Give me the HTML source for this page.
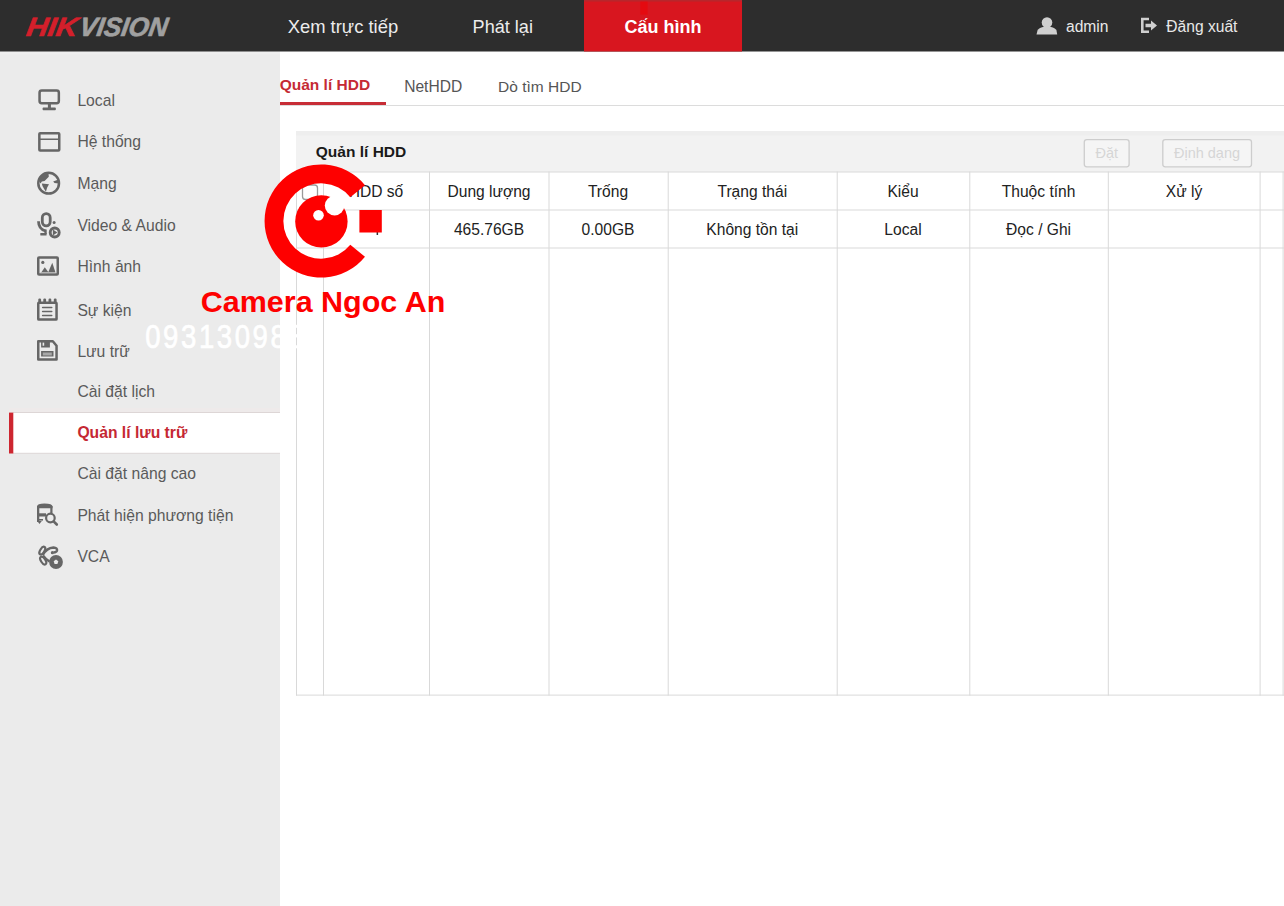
<!DOCTYPE html>
<html><head><meta charset="utf-8">
<style>
html,body{margin:0;padding:0;width:1284px;height:906px;overflow:hidden;background:#fff;}
svg{display:block;}
text{font-family:"Liberation Sans",sans-serif;}
</style></head>
<body>
<svg width="1284" height="906" viewBox="0 0 1284 906">
<!-- backgrounds -->
<rect x="0" y="0" width="1284" height="906" fill="#ffffff"/>
<rect x="0" y="51.5" width="280" height="854.5" fill="#ebebeb"/>
<rect x="0" y="51.5" width="280" height="3" fill="#eeeeee"/>
<rect x="0" y="0" width="1284" height="51.5" fill="#2d2d2d"/>

<!-- header logo -->
<g font-weight="bold" font-style="italic" font-size="26.5" transform="translate(0,36) skewX(-9) translate(0,-36)">
<text x="25.4" y="36" fill="#d41f2b" stroke="#d41f2b" stroke-width="0.7" textLength="51" lengthAdjust="spacingAndGlyphs">HIK</text>
<text x="78.4" y="36" fill="#a0a0a0" stroke="#a0a0a0" stroke-width="0.7" textLength="88" lengthAdjust="spacingAndGlyphs">VISION</text>
</g>

<!-- nav -->
<g font-size="18" fill="#ececec">
<text x="287.7" y="32.7" font-size="18.4">Xem trực tiếp</text>
<text x="472.6" y="32.7" font-size="18.1">Phát lại</text>
</g>
<rect x="584" y="0" width="158" height="51.5" fill="#d8161f"/>
<rect x="584" y="0" width="158" height="1.6" fill="#b8262c"/>
<rect x="640.3" y="1.6" width="7.3" height="13" fill="#e40a10"/>
<text x="663" y="32.7" font-size="18" font-weight="bold" fill="#ffffff" text-anchor="middle">Cấu hình</text>

<!-- user -->
<g fill="#cfcfcf">
<circle cx="1047" cy="22.5" r="5.3"/>
<path d="M1036.5 34.5 L1037.5 30.5 Q1039 27.5 1043 27 L1051 27 Q1055 27.5 1056.5 30.5 L1057.2 34.5 Z"/>
</g>
<text x="1066" y="31.9" font-size="15.6" fill="#e8e8e8">admin</text>
<g fill="none" stroke="#cfcfcf" stroke-width="2.6">
<path d="M1149 19 L1142.3 19 L1142.3 31.8 L1149 31.8"/>
</g>
<path d="M1145.5 23.7 L1151 23.7 L1151 20.5 L1157 25.5 L1151 30.5 L1151 27.3 L1145.5 27.3 Z" fill="#cfcfcf"/>
<text x="1166.3" y="31.9" font-size="15.6" fill="#e8e8e8">Đăng xuất</text>

<!-- tabs -->
<rect x="280" y="105" width="1004" height="1" fill="#dcdcdc"/>
<rect x="280" y="102" width="106" height="3" fill="#c72d36"/>
<text x="279.7" y="90.1" font-size="15.5" font-weight="bold" fill="#c52a34">Quản lí HDD</text>
<text x="404.2" y="91.6" font-size="15.6" fill="#555555">NetHDD</text>
<text x="498.1" y="91.6" font-size="15.5" fill="#555555">Dò tìm HDD</text>

<!-- sidebar active row -->
<rect x="9" y="408" width="271" height="4.5" fill="#eeeaea"/>
<rect x="13" y="412.5" width="267" height="41" fill="#ffffff"/>
<rect x="13" y="412" width="267" height="1" fill="#ddd6d6"/>
<rect x="13" y="452.8" width="267" height="1" fill="#ddd6d6"/>
<rect x="9" y="412.6" width="4.3" height="40.9" fill="#cd2630"/>

<!-- sidebar text -->
<g font-size="15.7" fill="#5a5a5a">
<text x="77.4" y="105.8">Local</text>
<text x="77.4" y="147.0">Hệ thống</text>
<text x="77.4" y="189.1">Mạng</text>
<text x="77.4" y="230.7">Video &amp; Audio</text>
<text x="77.4" y="272.2">Hình ảnh</text>
<text x="77.4" y="315.5">Sự kiện</text>
<text x="77.4" y="356.9">Lưu trữ</text>
<text x="77.4" y="396.7">Cài đặt lịch</text>
<text x="77.4" y="437.7" font-weight="bold" fill="#c52833">Quản lí lưu trữ</text>
<text x="77.4" y="478.6">Cài đặt nâng cao</text>
<text x="77.4" y="520.6">Phát hiện phương tiện</text>
<text x="77.4" y="561.5">VCA</text>
</g>

<!-- sidebar icons -->
<g fill="none" stroke="#666" stroke-width="2.5">
<!-- local monitor -->
<rect x="39.55" y="90.55" width="19.3" height="12.6" rx="2.2"/>
<!-- he thong -->
<rect x="39.35" y="133.25" width="19.9" height="17.2" rx="0.8"/>
<!-- globe -->
<circle cx="48.65" cy="183.2" r="10.35"/>
<!-- image -->
<rect x="38.25" y="257.55" width="19.5" height="17" rx="0.8"/>
<!-- notepad -->
<rect x="38.25" y="302.8" width="18.3" height="16.75" rx="0.6"/>
<!-- floppy -->
<path d="M38.25 341.25 L52.8 341.25 L56.55 345.8 L56.55 359.45 L38.25 359.45 Z" stroke-linejoin="round"/>
<!-- mic capsule -->
<rect x="42.3" y="213.7" width="7.9" height="12.1" rx="3.95" stroke-width="2.8"/>
<path d="M38.5 221.3 Q38.6 229 45.5 231" stroke-width="2.8"/>
<!-- play circle -->
<circle cx="54.7" cy="232.5" r="4.5" stroke-width="2.9"/>
<!-- magnifier -->
<circle cx="50.4" cy="518" r="4.3" stroke-width="2.2"/>
<path d="M53.6 521.3 L56.8 524.5" stroke-width="2.6" stroke-linecap="round"/>
<!-- vca loop -->
<ellipse cx="42.3" cy="550.6" rx="4.3" ry="2.1" transform="rotate(-58 42.3 550.6)" stroke-width="2.2"/>
<ellipse cx="43.2" cy="560.6" rx="4.4" ry="2.2" transform="rotate(58 43.2 560.6)" stroke-width="2.2"/>
<path d="M42.8 555 Q46.5 548 53.5 547.5 Q57.5 547.8 57 550.5 Q56.5 552.3 53.5 552.6" stroke-width="2.5"/>
<path d="M43 555.5 Q45.5 559 49.5 561.5" stroke-width="2.2"/>

</g>
<g fill="#666">
<!-- monitor stand -->
<rect x="47.9" y="103.5" width="3" height="4.5"/>
<rect x="42.6" y="107.6" width="13.2" height="2.7" rx="0.8"/>
<!-- he thong bar -->
<rect x="39.35" y="138.5" width="19.9" height="1.5"/>
<!-- globe continents -->
<path d="M48.6 174 L48.8 176.8 L46.3 179.2 L44.6 181 L41.9 181.6 L40.5 183.6 L39 181 L40.5 176.5 L44 174 Z"/>
<path d="M41.8 183.6 L49 184.2 L47.2 187.4 L45.9 191.8 L44 188.8 L42.5 186 Z"/>
<path d="M53.2 181.4 L58.4 179.6 L58.5 183.4 L54.5 183.1 Z"/>
<!-- mic stand -->
<rect x="44.4" y="229.5" width="2.3" height="4.5"/>
<rect x="40.3" y="232.9" width="6.3" height="2.6" rx="0.6"/>
<circle cx="54.1" cy="222.6" r="1.5"/>
<path d="M52.9 229.6 L57.4 232.5 L52.9 235.4 Z"/>
<!-- image inner -->
<circle cx="42.8" cy="262.4" r="1.6"/>
<path d="M41.4 272.2 L44.8 267.3 L48.4 272.2 Z"/>
<path d="M48.2 272.2 L52.3 262.8 L55.4 272.2 Z"/>
<rect x="40.5" y="272.3" width="15" height="0.9" fill="#aaa"/>
<!-- notepad bumps & lines -->
<rect x="38.3" y="298.6" width="2.8" height="4.6" rx="1.2"/>
<rect x="43.3" y="298.6" width="2.8" height="4.6" rx="1.2"/>
<rect x="48.5" y="298.6" width="2.8" height="4.6" rx="1.2"/>
<rect x="53.8" y="298.6" width="2.8" height="4.6" rx="1.2"/>
<rect x="41.9" y="306.7" width="10.6" height="1.5" rx="0.7"/>
<rect x="41.9" y="310.7" width="10.6" height="1.5" rx="0.7"/>
<rect x="41.9" y="314.7" width="10.6" height="1.5" rx="0.7"/>
<!-- floppy inner -->
<path d="M41.1 340.5 L49.9 340.5 L49.9 347.6 L41.1 347.6 Z M42.6 342.3 L42.6 345.8 L44.2 345.8 L44.2 342.3 Z" fill-rule="evenodd"/>
<path d="M41.1 351 L53.5 351 L53.5 356.5 L41.1 356.5 Z M42.8 352.7 L42.8 353.5 L51.8 353.5 L51.8 352.7 Z M42.8 354.5 L42.8 355.2 L51.8 355.2 L51.8 354.5 Z" fill-rule="evenodd"/>
<!-- vehicle -->
<path d="M37 506.5 Q37 503.5 44.5 503.5 Q52.5 503.5 52.5 506.5 L52.5 508.3 L37 508.3 Z"/>
<rect x="37" y="506" width="2.3" height="16"/>
<rect x="50.3" y="506" width="2.2" height="7"/>
<rect x="37" y="513.3" width="9" height="3.2"/>
<rect x="37" y="519" width="6" height="1.6"/>
<path d="M37.2 521 L41.8 521 L39.5 524 Z"/>
<!-- vca disc -->
<circle cx="56" cy="562" r="6.9"/>
<circle cx="52.4" cy="552.7" r="1.6"/>
</g>
<path d="M56 559.6 L58.3 561.3 L57.4 564 L54.6 564 L53.7 561.3 Z" fill="#ebebeb"/>

<!-- panel -->
<rect x="296" y="131" width="988" height="41" fill="#f2f2f2"/>
<rect x="296" y="131" width="988" height="4.5" fill="#eeeeee"/>
<text x="315.8" y="157.4" font-size="15.5" font-weight="bold" fill="#1a1a1a">Quản lí HDD</text>
<rect x="1084.3" y="139.6" width="44.8" height="27.2" rx="2.5" fill="#f5f5f5" stroke="#cdcdcd" stroke-width="1.3"/>
<text x="1106.7" y="157.8" font-size="14.5" fill="#d6d6d6" text-anchor="middle">Đặt</text>
<rect x="1162.8" y="139.6" width="88.7" height="27.2" rx="2.5" fill="#f5f5f5" stroke="#cdcdcd" stroke-width="1.3"/>
<text x="1207" y="157.8" font-size="14.5" fill="#d6d6d6" text-anchor="middle">Định dạng</text>

<!-- table -->
<g fill="#d9d9d9">
<rect x="296" y="171.5" width="988" height="1"/>
<rect x="296" y="209.5" width="988" height="1"/>
<rect x="296" y="247.5" width="988" height="1"/>
<rect x="296" y="694.6" width="988" height="1"/>
<rect x="296" y="171.5" width="1" height="524.1"/>
<rect x="323" y="171.5" width="1" height="524.1"/>
<rect x="429" y="171.5" width="1" height="524.1"/>
<rect x="548.5" y="171.5" width="1" height="524.1"/>
<rect x="667.7" y="171.5" width="1" height="524.1"/>
<rect x="836.7" y="171.5" width="1" height="524.1"/>
<rect x="969.3" y="171.5" width="1" height="524.1"/>
<rect x="1107.8" y="171.5" width="1" height="524.1"/>
<rect x="1259.6" y="171.5" width="1" height="524.1"/>
<rect x="1282.6" y="171.5" width="1" height="524.1"/>
</g>
<rect x="302.5" y="185" width="15" height="14.5" rx="3" fill="#fff" stroke="#9a9a9a" stroke-width="1.3"/>
<g font-size="15.6" fill="#222" text-anchor="middle">
<text x="376" y="196.8">HDD số</text>
<text x="489" y="196.8">Dung lượng</text>
<text x="608" y="196.8">Trống</text>
<text x="752.3" y="196.8">Trạng thái</text>
<text x="903" y="196.8">Kiểu</text>
<text x="1038.6" y="196.8">Thuộc tính</text>
<text x="1184" y="196.8">Xử lý</text>
<text x="489" y="234.8">465.76GB</text>
<text x="608" y="234.8">0.00GB</text>
<text x="752.3" y="234.8">Không tồn tại</text>
<text x="903" y="234.8">Local</text>
<text x="1038.6" y="234.8">Đọc / Ghi</text>
</g>

<rect x="376.6" y="231" width="1.5" height="4" fill="#333"/>
<!-- watermark logo -->
<g fill="#fe0000">
<path d="M365.0 185.2 A56.6 56.6 0 1 0 365.0 256.8 L350.3 244.8 A37.7 37.7 0 1 1 350.3 197.2 Z"/>
</g>
<circle cx="321.4" cy="221.4" r="26.2" fill="#fe0000"/>
<circle cx="334.6" cy="205.6" r="9.8" fill="#ffffff"/>
<circle cx="318.5" cy="215.3" r="5.3" fill="#ffffff"/>
<rect x="359.4" y="210" width="22.4" height="22.5" fill="#fe0000"/>
<text x="200.8" y="312.2" font-size="30" font-weight="bold" fill="#fe0000" textLength="244.5" lengthAdjust="spacingAndGlyphs">Camera Ngoc An</text>
<text transform="translate(145.2,348.3) scale(0.84,1)" x="0.00 21.31 42.62 63.93 85.24 106.55 127.86 149.17 170.48 191.79" y="0" font-size="32.8" fill="#ffffff" stroke="#ffffff" stroke-width="0.7">0931309882</text>
</svg>
</body></html>
